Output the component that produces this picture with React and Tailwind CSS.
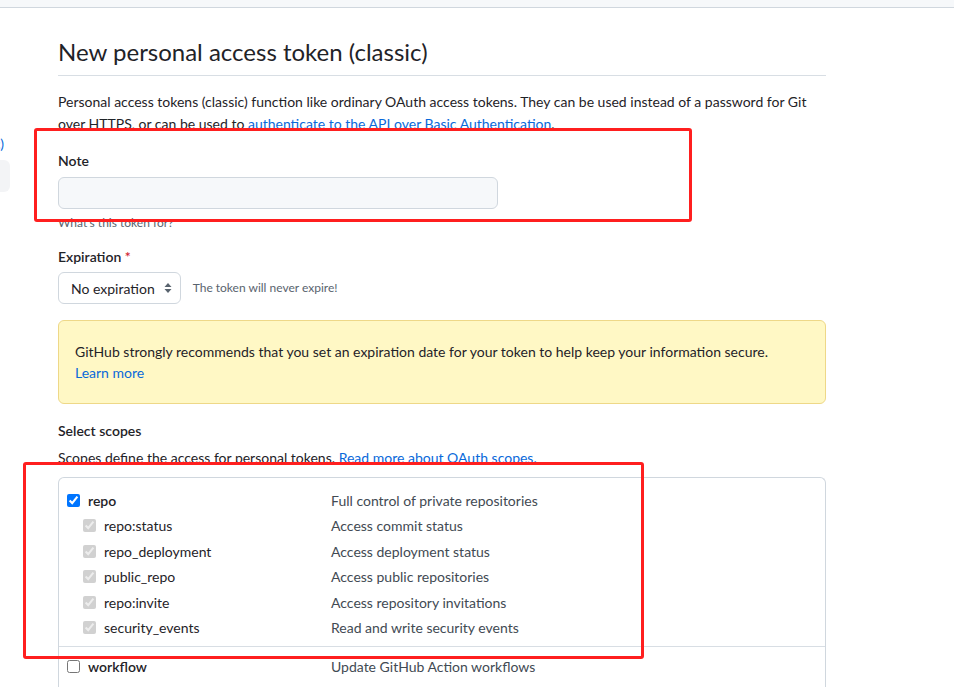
import React from 'react';

const subScopes = [
  ['repo:status', 'Access commit status'],
  ['repo_deployment', 'Access deployment status'],
  ['public_repo', 'Access public repositories'],
  ['repo:invite', 'Access repository invitations'],
  ['security_events', 'Read and write security events'],
];

function SelectArrows() {
  return (
    <svg width="8" height="12" viewBox="0 0 8 12" className="text-[#59636e]">
      <path d="M4 1 L7.5 5 H0.5 Z" fill="currentColor" />
      <path d="M4 11 L0.5 7 H7.5 Z" fill="currentColor" />
    </svg>
  );
}

export default function App() {
  return (
    <div
      className="relative min-h-screen bg-white text-[#1f2328] text-[14px]"
      style={{ fontFamily: 'Lato, "Liberation Sans", sans-serif' }}
    >
      {/* top bar */}
      <div className="h-[8px] bg-[#f6f8fa] border-b border-[#d0d7de]" />

      <div className="flex">
        {/* sidebar, mostly cut off */}
        <aside className="w-[10px] shrink-0 overflow-hidden flex flex-col items-end">
          <div className="mt-[125px] whitespace-nowrap text-[#0969da] leading-[21px] mr-[6px]">Tokens (classic)</div>
          <div className="mt-[6px] h-[32px] w-[200px] shrink-0 rounded-[6px] bg-[#f3f4f6]" />
        </aside>

        <main className="ml-[48px] w-[768px] shrink-0">
          <h1 className="pt-[29px] pb-[8px] text-[24px] leading-[30px] font-normal border-b border-[#d8dee4]">
            New personal access token (classic)
          </h1>

          <p className="mt-[15px] leading-[22px]">
            Personal access tokens (classic) function like ordinary OAuth access tokens. They can be used instead of a password for Git
            over HTTPS, or can be used to{' '}
            <a className="text-[#0969da]">authenticate to the API over Basic Authentication</a>.
          </p>

          <div className="mt-[15px]">
            <label className="block font-semibold leading-[21px]">Note</label>
            <input
              type="text"
              className="mt-[6px] block w-[440px] h-[32px] rounded-[6px] border border-[#d0d7de] bg-[#f6f8fa] px-3 outline-none"
            />
            <p className="mt-[5px] text-[12px] leading-[18px] text-[#59636e]">What's this token for?</p>
          </div>

          <div className="mt-[14px]">
            <label className="block font-semibold leading-[21px]">
              Expiration <span className="text-[#d1242f]">*</span>
            </label>
            <div className="mt-[5px] flex items-center gap-[12px]">
              <div className="flex items-center gap-[9px] h-[32px] rounded-[6px] border border-[#d0d7de] bg-white pl-[12px] pr-[8px]">
                <span>No expiration</span>
                <SelectArrows />
              </div>
              <span className="text-[12px] text-[#59636e]">The token will never expire!</span>
            </div>
          </div>

          <div className="mt-[16px] rounded-[6px] border border-[#eed888] bg-[#fff8c5] px-[16px] py-[20px] leading-[21px]">
            GitHub strongly recommends that you set an expiration date for your token to help keep your information secure.
            <br />
            <a className="text-[#0969da]">Learn more</a>
          </div>

          <div className="mt-[16px]">
            <h3 className="font-semibold leading-[21px]">Select scopes</h3>
            <p className="mt-[6px] leading-[21px]">
              Scopes define the access for personal tokens.{' '}
              <a className="text-[#0969da]">Read more about OAuth scopes.</a>
            </p>
          </div>

          <div className="mt-[9px] rounded-t-[6px] border border-b-0 border-[#d0d7de] h-[220px]">
            <div className="pt-[9.5px] pb-[5px] pl-[8px] border-b border-[#d8dee4]">
              <div className="flex items-center h-[25.5px]">
                <div className="w-[264px] flex items-center gap-[8px]">
                  <input type="checkbox" defaultChecked className="m-0 w-[13px] h-[13px]" />
                  <span className="font-semibold">repo</span>
                </div>
                <span className="text-[#424a53]">Full control of private repositories</span>
              </div>
              {subScopes.map(([name, desc]) => (
                <div key={name} className="flex items-center h-[25.5px]">
                  <div className="w-[264px] flex items-center gap-[8px] pl-[16px]">
                    <input type="checkbox" defaultChecked disabled className="m-0 w-[13px] h-[13px]" />
                    <span>{name}</span>
                  </div>
                  <span className="text-[#424a53]">{desc}</span>
                </div>
              ))}
            </div>
            <div className="pt-[7.5px] pl-[8px]">
              <div className="flex items-center h-[25.5px]">
                <div className="w-[264px] flex items-center gap-[8px]">
                  <input type="checkbox" className="m-0 w-[13px] h-[13px]" />
                  <span className="font-semibold">workflow</span>
                </div>
                <span className="text-[#424a53]">Update GitHub Action workflows</span>
              </div>
            </div>
          </div>
        </main>
      </div>

      {/* red annotation boxes */}
      <div className="absolute left-[34px] top-[128px] w-[658px] h-[94px] border-[3px] border-[#ff1f1f] rounded-[3px] pointer-events-none" />
      <div className="absolute left-[23px] top-[462px] w-[621px] h-[197px] border-[3px] border-[#ff1f1f] rounded-[3px] pointer-events-none" />
    </div>
  );
}
